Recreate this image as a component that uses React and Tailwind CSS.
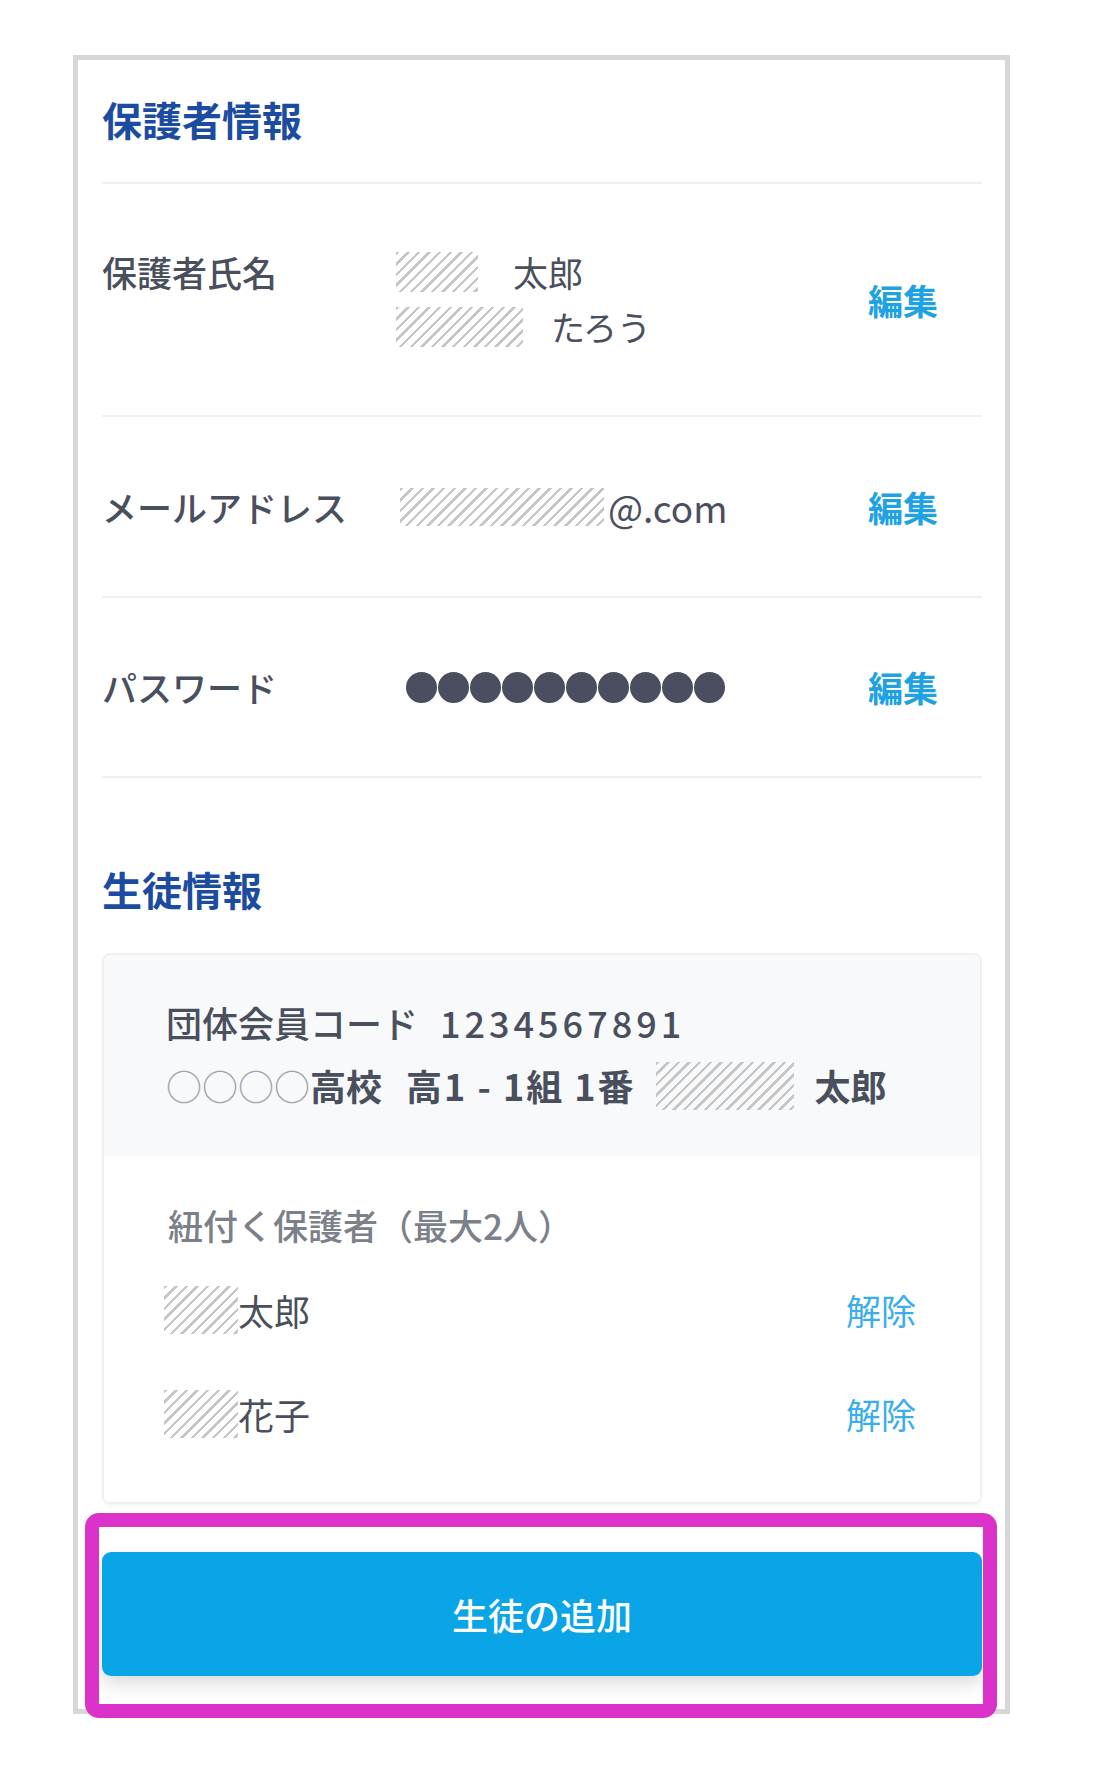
const hatch =
  "bg-[repeating-linear-gradient(135deg,#c6c6c6_0px,#c6c6c6_2.5px,transparent_2.5px,transparent_7.5px)]";

const EditLink = () => (
  <span className="w-[70px] text-[35px] leading-[40px] font-bold text-[#1ea2e2]">
    編集
  </span>
);

const Guardian = ({ name }) => (
  <div className="flex h-[104px] items-center justify-between">
    <div className="flex items-center">
      <span className={`h-[48px] w-[74px] ${hatch}`} />
      <span className="text-[36px] leading-[48px] text-[#4a4f5e]">{name}</span>
    </div>
    <span className="text-[35px] leading-[48px] text-[#3aaeea]">解除</span>
  </div>
);

export default function App() {
  return (
    <div className="min-h-[1781px] bg-white pt-[55px] pl-[73px] font-['Noto_Sans_CJK_JP','Noto_Sans',sans-serif]">
      <div className="w-[937px] border-[5px] border-[#d7d7d7] bg-white pl-[24px] pr-[23px] pb-[33px]">
        {/* guardian info */}
        <h2 className="border-b-2 border-[#eef0f3] pt-[34px] pb-[38px] text-[40px] leading-[50px] font-bold text-[#1c4ca0]">
          保護者情報
        </h2>

        <div className="flex h-[233px] items-center border-b-2 border-[#eef0f3] pr-[44px]">
          <div className="flex flex-1 items-start">
            <span className="w-[294px] text-[35px] leading-[40px] font-medium text-[#4a4f5e]">
              保護者氏名
            </span>
            <div className="flex flex-col gap-[15px]">
              <div className="flex items-center">
                <span className={`h-[40px] w-[82px] ${hatch}`} />
                <span className="ml-[35px] text-[35px] leading-[40px] text-[#4a4f5e]">太郎</span>
              </div>
              <div className="flex items-center">
                <span className={`h-[40px] w-[127px] ${hatch}`} />
                <span className="ml-[28px] text-[34px] leading-[40px] text-[#4a4f5e]">たろう</span>
              </div>
            </div>
          </div>
          <EditLink />
        </div>

        <div className="flex h-[181px] items-center border-b-2 border-[#eef0f3] pr-[44px]">
          <span className="w-[298px] text-[35px] leading-[40px] font-medium text-[#4a4f5e]">
            メールアドレス
          </span>
          <div className="flex flex-1 items-center">
            <span className={`h-[38px] w-[204px] ${hatch}`} />
            <span className="ml-[4px] text-[37px] leading-[40px] text-[#4a4f5e]">@.com</span>
          </div>
          <EditLink />
        </div>

        <div className="flex h-[180px] items-center border-b-2 border-[#eef0f3] pr-[44px]">
          <span className="w-[304px] text-[35px] leading-[40px] font-medium text-[#4a4f5e]">
            パスワード
          </span>
          <div className="flex flex-1 items-center gap-[1px]">
            {Array.from({ length: 10 }).map((_, i) => (
              <span key={i} className="h-[31px] w-[31px] rounded-full bg-[#4a4e5f]" />
            ))}
          </div>
          <EditLink />
        </div>

        {/* student info */}
        <h2 className="mt-[86px] text-[40px] leading-[50px] font-bold text-[#1c4ca0]">生徒情報</h2>

        <div className="mt-[39px] overflow-hidden rounded-[8px] border-2 border-[#eef0f2] shadow-[0_2px_4px_rgba(0,0,0,0.04)]">
          <div className="bg-[#f8f9fa] pl-[62px] pt-[36px] pb-[39px] text-[36px] leading-[63px] text-[#4a4f5e]">
            <div className="flex items-center font-medium">
              <span>団体会員コード</span>
              <span className="ml-[22px] tracking-[4px]">1234567891</span>
            </div>
            <div className="flex items-center font-bold">
              <span className="font-normal text-[#a0a4ac]">○○○○</span>
              <span>高校</span>
              <span className="ml-[24px] tracking-[2px]">高1 - 1組 1番</span>
              <span className={`ml-[20px] h-[48px] w-[138px] ${hatch}`} />
              <span className="ml-[21px]">太郎</span>
            </div>
          </div>
          <div className="bg-white pl-[60px] pr-[64px] pt-[44px] pb-[36px]">
            <p className="ml-[4px] text-[35px] leading-[50px] font-medium text-[#7b8089]">
              紐付く保護者（最大2人）
            </p>
            <div className="mt-[8px]">
              <Guardian name="太郎" />
              <Guardian name="花子" />
            </div>
          </div>
        </div>

        <div className="relative mt-[48px]">
          <button className="h-[124px] w-full rounded-[9px] bg-[#0aa5e6] text-[36px] font-medium text-white shadow-[0_8px_18px_rgba(0,0,0,0.14)]">
            生徒の追加
          </button>
          {/* highlight frame */}
          <div className="pointer-events-none absolute -top-[39px] -right-[15px] -bottom-[42px] -left-[17px] rounded-[14px] border-[14px] border-[#db32c9]" />
        </div>
      </div>
    </div>
  );
}
